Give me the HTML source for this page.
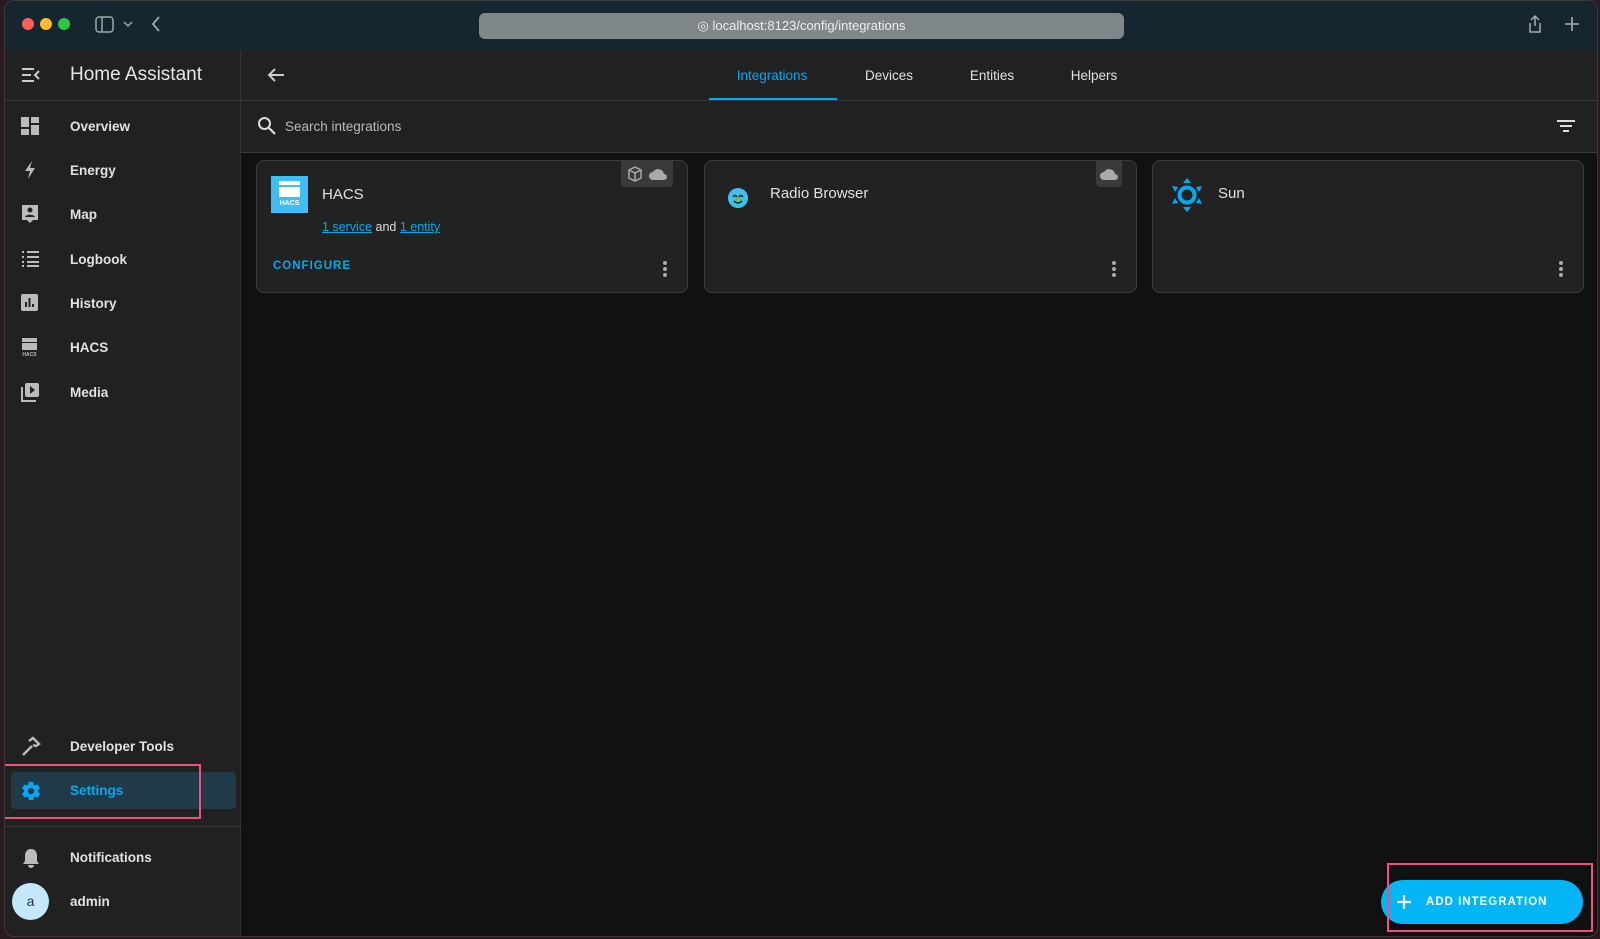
<!DOCTYPE html>
<html><head><meta charset="utf-8"><style>
*{box-sizing:border-box;margin:0;padding:0}
body{width:1600px;height:939px;background:#2a1a20;font-family:"Liberation Sans",sans-serif;position:relative;overflow:hidden;color:#e1e1e1}
.abs{position:absolute}
.win{left:4px;top:0;width:1594px;height:937px;background:#111;border-radius:10px;overflow:hidden;border:1px solid #3a3a3a}
.title{left:0;top:0;width:100%;height:49px;background:#15262f}
.dot{width:12px;height:12px;border-radius:50%;top:17px}
.side{left:0;top:49px;width:236px;height:890px;background:#212121;border-right:1px solid #333}
.item{left:0;width:236px;height:40px;font-size:13.5px;font-weight:bold;color:#e1e1e1}
.item span{position:absolute;left:65px;top:12px}
.item svg{position:absolute;left:15px;top:9px}
.hdr{left:236px;top:49px;width:1358px;height:51px;background:#212121;border-bottom:1px solid #3a3a3a}
.srch{left:236px;top:100px;width:1358px;height:52px;background:#212121;border-bottom:1px solid #3a3a3a}
.tab{top:18px;font-size:13.5px;color:#e1e1e1;transform:translateX(-50%)}
.card{top:159px;height:133px;background:#222;border:1px solid #3c3c3c;border-radius:8px}
.card .t{position:absolute;left:65px;top:25px;font-size:15px;color:#e1e1e1}
.dots{position:absolute;right:20px;top:100px;width:4px}
.dots i{display:block;width:4px;height:4px;border-radius:50%;background:#aaa;margin-bottom:2px}
.badge{position:absolute;top:0;background:#3a3a3a;border-radius:0 0 4px 4px;height:26px}
</style></head><body>
<div class="abs win">
 <div class="abs title">
  <div class="abs dot" style="left:17px;background:#ff5f57"></div>
  <div class="abs dot" style="left:35px;background:#febc2e"></div>
  <div class="abs dot" style="left:53px;background:#28c840"></div>
  <svg class="abs" style="left:90px;top:15px" width="20" height="18"><rect x="1" y="1" width="17" height="15" rx="3" fill="none" stroke="#9aa" stroke-width="1.5"/><line x1="7" y1="1" x2="7" y2="16" stroke="#9aa" stroke-width="1.5"/></svg>
  <svg class="abs" style="left:118px;top:20px" width="10" height="8"><path d="M1 1l4 4 4-4" fill="none" stroke="#9aa" stroke-width="1.5"/></svg>
  <svg class="abs" style="left:146px;top:14px" width="10" height="18"><path d="M8 2L2 9l6 7" fill="none" stroke="#9aa" stroke-width="1.8"/></svg>
  <div class="abs" style="left:474px;top:12px;width:645px;height:26px;background:#7f8789;border-radius:6px;font-size:13px;color:#eee;text-align:center;line-height:26px">&#9678; localhost:8123/config/integrations</div>
  <svg class="abs" style="left:1522px;top:13px" width="16" height="20"><path d="M8 2v10M4 6l4-4 4 4M3 9v9h10V9" fill="none" stroke="#aab" stroke-width="1.5"/></svg>
  <svg class="abs" style="left:1560px;top:16px" width="14" height="14"><path d="M7 0v14M0 7h14" stroke="#aab" stroke-width="1.6"/></svg>
 </div>
 <div class="abs side">
  <svg class="abs" style="left:15px;top:16px" width="22" height="18"><path d="M2 3h12M2 9h9M2 15h12M19 5l-4 4 4 4" fill="none" stroke="#ccc" stroke-width="2"/></svg>
  <div class="abs" style="left:65px;top:14px;font-size:19px;color:#e6e6e6">Home Assistant</div>
  <div class="abs" style="left:0;top:50px;width:236px;height:1px;background:#3a3a3a"></div>
  <div class="abs item" style="top:57px"><svg width="20" height="20"><path d="M1 1h8v10H1zM11 1h8v6h-8zM11 9h8v10h-8zM1 13h8v6H1z" fill="#bbb"/></svg><span>Overview</span></div>
  <div class="abs item" style="top:101px"><svg width="20" height="20"><path d="M12 1L5 11h5l-2 8 7-11h-5z" fill="#bbb"/></svg><span>Energy</span></div>
  <div class="abs item" style="top:145px"><svg width="20" height="20"><path d="M2 1h16v15h-5l-3 3-3-3H2z" fill="#bbb"/><circle cx="10" cy="6" r="2.5" fill="#222"/><path d="M5 13c1-3 9-3 10 0z" fill="#222"/></svg><span>Map</span></div>
  <div class="abs item" style="top:190px"><svg width="20" height="20"><path d="M7 3h12M7 8h12M7 13h12M7 17h12M2 3h2M2 8h2M2 13h2M2 17h2" stroke="#bbb" stroke-width="2"/></svg><span>Logbook</span></div>
  <div class="abs item" style="top:234px"><svg width="20" height="20"><rect x="1" y="1" width="17" height="17" rx="2" fill="#bbb"/><path d="M6 14V9M9.5 14V5M13 14v-3" stroke="#222" stroke-width="2"/></svg><span>History</span></div>
  <div class="abs item" style="top:278px"><svg width="20" height="20"><rect x="2" y="1" width="15" height="4" fill="#bbb"/><rect x="2" y="6" width="15" height="7" fill="#bbb"/><text x="9.5" y="19" font-size="5" fill="#bbb" text-anchor="middle" font-family="Liberation Sans">HACS</text></svg><span>HACS</span></div>
  <div class="abs item" style="top:323px"><svg width="20" height="20"><rect x="5" y="1" width="14" height="14" rx="2" fill="#bbb"/><path d="M10 4v8l5-4z" fill="#222"/><path d="M2 5v14h14" fill="none" stroke="#bbb" stroke-width="2"/></svg><span>Media</span></div>
  <div class="abs item" style="top:677px"><svg width="22" height="22"><path d="M3 19l9-9M9 5l4-3 6 6-3 2-3-1" stroke="#bbb" stroke-width="2.4" fill="none"/></svg><span>Developer Tools</span></div>
  <div class="abs" style="left:6px;top:722px;width:225px;height:37px;background:#203a4a;border-radius:4px"></div>
  <div class="abs item" style="top:721px;color:#03a9f4"><svg width="22" height="22" viewBox="0 0 24 24"><path fill="#03a9f4" d="M12 15.5A3.5 3.5 0 1 1 12 8.5a3.5 3.5 0 0 1 0 7m7.43-2.530c.04-.32.07-.64.07-.97s-.03-.66-.07-1l2.11-1.63c.19-.15.24-.42.12-.64l-2-3.46c-.12-.22-.39-.31-.61-.22l-2.49 1c-.52-.39-1.06-.73-1.690-.98l-.37-2.65A.506.506 0 0 0 14 2h-4c-.25 0-.46.18-.5.42l-.37 2.65c-.63.25-1.17.59-1.69.98l-2.49-1c-.22-.09-.49 0-.61.22l-2 3.46c-.13.22-.07.49.12.64L4.57 11c-.04.34-.07.67-.07 1s.03.65.07.97l-2.11 1.66c-.19.15-.25.42-.12.64l2 3.46c.12.22.39.3.61.22l2.49-1.01c.52.4 1.06.74 1.69.99l.37 2.65c.04.24.25.42.5.42h4c.25 0 .46-.18.5-.42l.37-2.65c.63-.26 1.17-.59 1.69-.99l2.49 1.01c.22.08.49 0 .61-.22l2-3.46c.12-.22.07-.49-.12-.64z"/></svg><span>Settings</span></div>
  <div class="abs" style="left:0;top:776px;width:236px;height:1px;background:#3a3a3a"></div>
  <div class="abs item" style="top:788px"><svg width="22" height="22"><path d="M11 2c-4 0-6 3-6 7v5l-2 3h16l-2-3V9c0-4-2-7-6-7zM8 18a3 3 0 0 0 6 0z" fill="#bbb"/></svg><span>Notifications</span></div>
  <div class="abs" style="left:7px;top:833px;width:37px;height:37px;border-radius:50%;background:#c4e8fb;color:#333;font-size:14px;text-align:center;line-height:36px">a</div>
  <div class="abs item" style="top:832px"><span>admin</span></div>
 </div>
 <div class="abs" style="left:-4px;top:763px;width:200px;height:55px;border:2px solid #f0507a"></div>
 <div class="abs hdr">
  <svg class="abs" style="left:26px;top:17px" width="18" height="16"><path d="M17 8H2M8 2L2 8l6 6" fill="none" stroke="#ccc" stroke-width="2"/></svg>
  <div class="abs tab" style="left:531px;color:#03a9f4">Integrations</div>
  <div class="abs tab" style="left:648px">Devices</div>
  <div class="abs tab" style="left:751px">Entities</div>
  <div class="abs tab" style="left:853px">Helpers</div>
  <div class="abs" style="left:468px;top:48px;width:128px;height:2px;background:#03a9f4"></div>
 </div>
 <div class="abs srch">
  <svg class="abs" style="left:16px;top:15px" width="20" height="20"><circle cx="7.5" cy="7.5" r="5.5" fill="none" stroke="#ddd" stroke-width="2"/><path d="M11.5 11.5L18 18" stroke="#ddd" stroke-width="2.2"/></svg>
  <div class="abs" style="left:44px;top:18px;font-size:13.5px;color:#bbb">Search integrations</div>
  <svg class="abs" style="left:1316px;top:18px" width="18" height="14"><path d="M0 2h18M3 7h12M6 12h6" stroke="#ddd" stroke-width="2"/></svg>
 </div>
 <div class="abs card" style="left:251px;width:432px">
  <div class="badge" style="right:14px;width:52px"><svg style="position:absolute;left:6px;top:5px" width="16" height="16"><path d="M8 1l6 3v8l-6 3-6-3V4z M2 4l6 3 6-3M8 7v8" fill="none" stroke="#aaa" stroke-width="1.5"/></svg><svg style="position:absolute;left:27px;top:6px" width="20" height="14"><path d="M5 13a4 4 0 0 1 0-8 6 6 0 0 1 11 2 3 3 0 0 1 0 6z" fill="#aaa"/></svg></div>
  <div class="abs" style="left:14px;top:15px;width:37px;height:37px;background:#41bdf5"><div style="position:absolute;left:8px;top:5px;width:21px;height:4px;background:#fff"></div><div style="position:absolute;left:8px;top:11px;width:21px;height:10px;background:#fff"></div><div style="position:absolute;left:0;top:24px;width:37px;text-align:center;font-size:7px;color:#fff;font-weight:bold">HACS</div></div>
  <div class="t">HACS</div>
  <div class="abs" style="left:65px;top:59px;font-size:12.5px;color:#ddd"><u style="color:#03a9f4">1 service</u> and <u style="color:#03a9f4">1 entity</u></div>
  <div class="abs" style="left:16px;top:99px;font-size:11.5px;font-weight:bold;color:#03a9f4;letter-spacing:1px">CONFIGURE</div>
  <div class="dots"><i></i><i></i><i></i></div>
 </div>
 <div class="abs card" style="left:699px;width:433px">
  <div class="badge" style="right:14px;width:26px"><svg style="position:absolute;left:3px;top:6px" width="20" height="14"><path d="M5 13a4 4 0 0 1 0-8 6 6 0 0 1 11 2 3 3 0 0 1 0 6z" fill="#aaa"/></svg></div>
  <svg class="abs" style="left:22px;top:24px" width="22" height="24"><circle cx="11" cy="13" r="10" fill="#3fc1f0"/><path d="M4 8c3 0 5 2 4 5s3 4 5 2 5-1 7 1" fill="#6fbf4a"/><path d="M6 12q2-3 4 0M12 12q2-3 4 0M7 16q4 4 8 0" fill="none" stroke="#222" stroke-width="1.5"/></svg>
  <div class="t" style="top:24px">Radio Browser</div>
  <div class="dots"><i></i><i></i><i></i></div>
 </div>
 <div class="abs card" style="left:1147px;width:432px">
  <svg class="abs" style="left:17px;top:16px" width="34" height="36" viewBox="0 0 34 36"><circle cx="17" cy="18" r="7.5" fill="none" stroke="#03a9f4" stroke-width="4"/><path d="M17 1l4 5h-8zM17 35l4-5h-8zM2 9l6 1-3 5zM32 9l-6 1 3 5zM2 27l6-1-3-5zM32 27l-6-1 3-5z" fill="#03a9f4"/></svg>
  <div class="t" style="top:24px">Sun</div>
  <div class="dots"><i></i><i></i><i></i></div>
 </div>
 <div class="abs" style="left:1376px;top:879px;width:202px;height:44px;border-radius:22px;background:#03b5f4;box-shadow:0 2px 6px rgba(0,0,0,.5)">
  <svg class="abs" style="left:16px;top:15px" width="14" height="14"><path d="M7 0v14M0 7h14" stroke="#fff" stroke-width="2.2"/></svg>
  <div class="abs" style="left:45px;top:16px;font-size:11.5px;font-weight:bold;color:#fff;letter-spacing:1px">ADD INTEGRATION</div>
 </div>
 <div class="abs" style="left:1382px;top:862px;width:206px;height:69px;border:2px solid #f0507a"></div>
</div>
</body></html>
